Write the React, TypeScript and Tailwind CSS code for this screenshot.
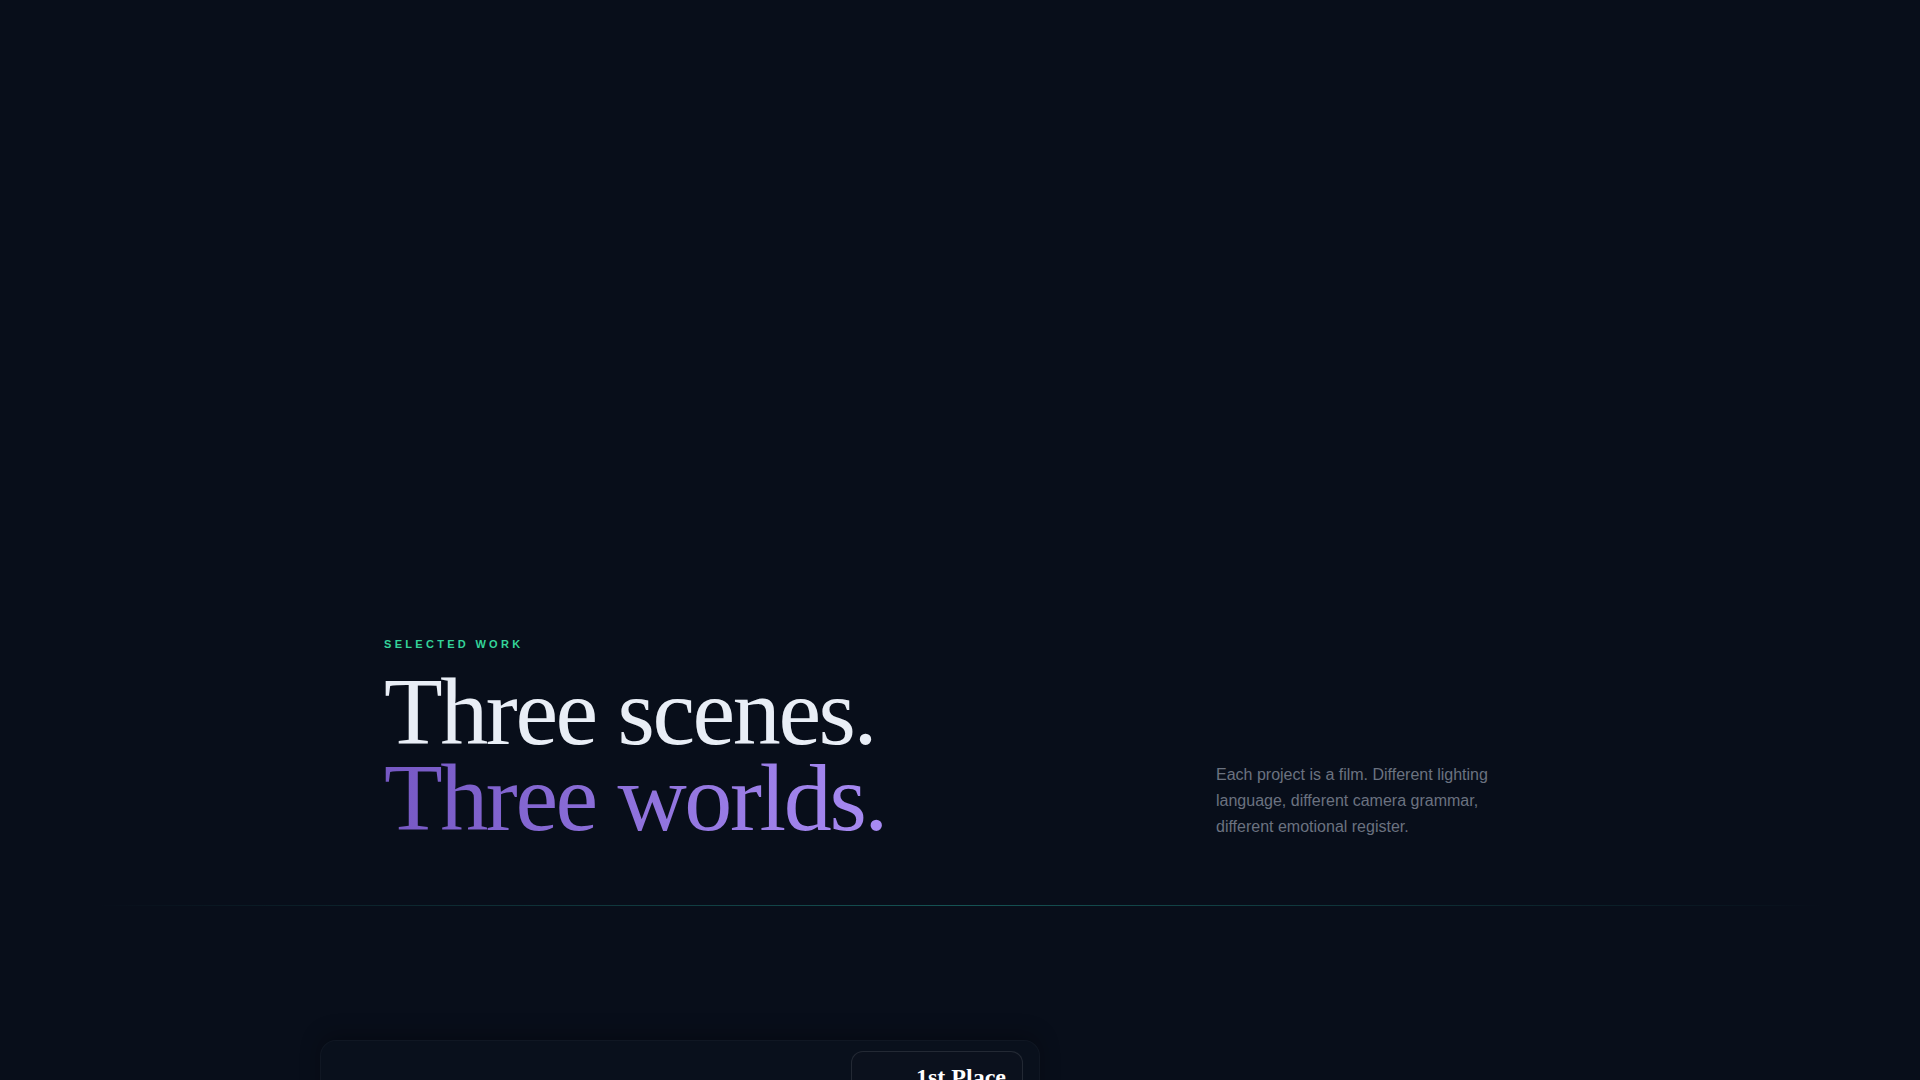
export default function App() {
  return (
    <div className="h-screen overflow-hidden bg-[#080e1a] font-['Liberation_Sans',Arial,sans-serif]">
      {/* empty hero space above the section */}
      <div className="h-[636px]" />

      <section className="mx-auto max-w-6xl">
        <div className="flex items-end justify-between">
          <div>
            <p className="text-[11px] font-bold uppercase leading-4 tracking-[0.3em] text-[#34d399]">
              Selected Work
            </p>
            <h2 className="mt-[17px] font-['Liberation_Serif','Times_New_Roman',serif] text-[96px] font-normal leading-[0.9] tracking-[-0.025em]">
              <span className="block text-[#e9eef6]">Three scenes.</span>
              <span className="inline-block bg-gradient-to-r from-[#7658c4] to-[#a88bf3] bg-clip-text text-transparent">
                Three worlds.
              </span>
            </h2>
          </div>
          <p className="mb-[2px] max-w-xs text-base leading-relaxed text-[#6b7280]">
            Each project is a film. Different lighting language, different camera grammar, different
            emotional register.
          </p>
        </div>
      </section>

      <div className="mx-auto mt-[63px] h-px w-[90%] bg-gradient-to-r from-transparent via-[#2dd4bf]/35 to-transparent" />

      <div className="mx-auto max-w-7xl pt-[134px]">
        <div className="relative h-[420px] w-[720px] rounded-2xl border border-white/[0.03] bg-[#09101c] shadow-[0_-6px_20px_rgba(0,0,0,0.25)]">
          <div className="absolute right-[16px] top-[10px] flex items-center rounded-xl border border-white/10 bg-[#0b111d] pb-3 pl-16 pr-4 pt-[9px]">
            <span className="font-['Liberation_Serif','Times_New_Roman',serif] text-2xl font-bold leading-8 text-white">
              1st Place
            </span>
          </div>
        </div>
      </div>
    </div>
  );
}
